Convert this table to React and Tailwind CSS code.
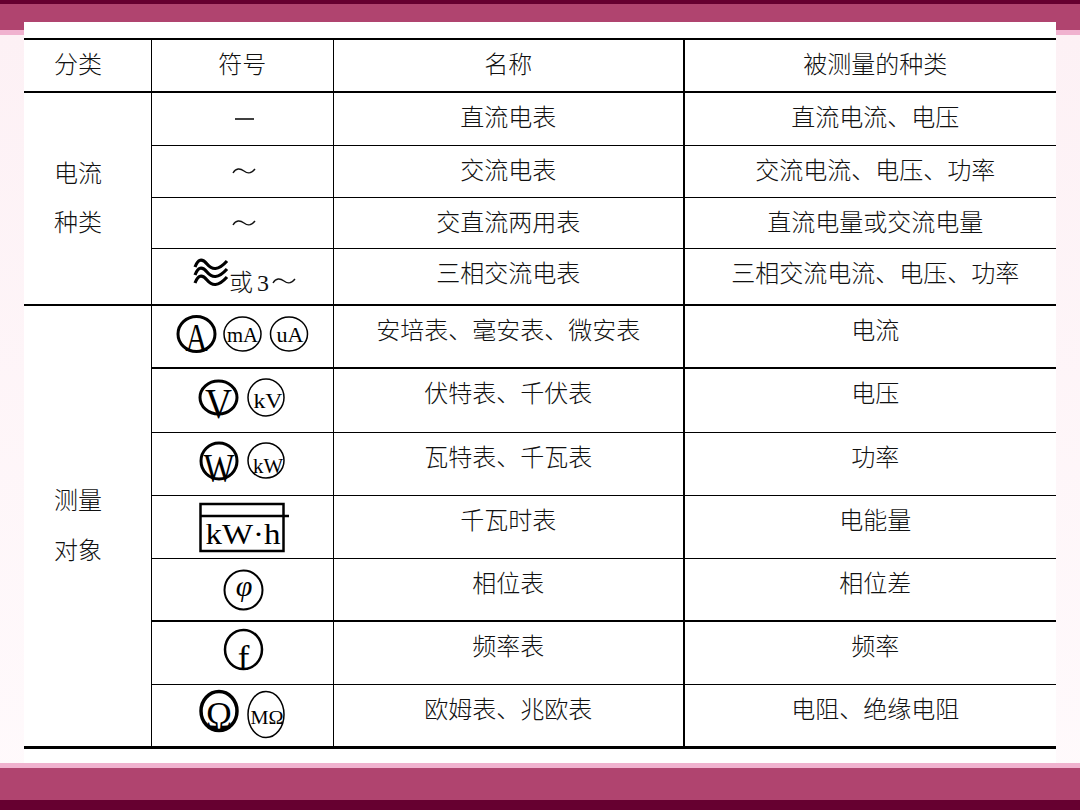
import React from 'react';

const SERIF = "'Liberation Serif', 'Times New Roman', serif";
const CJK = "'Noto Sans CJK SC', sans-serif";

const Ring = ({ cx, cy, rx, ry, w }) => (
    <ellipse cx={cx} cy={cy} rx={rx} ry={ry} fill="none" stroke="#000" strokeWidth={w} />
);

const T = ({ x, y, size, len, italic, children }) => (
    <text
        x={x}
        y={y}
        fontSize={size}
        fontFamily={SERIF}
        fontStyle={italic ? 'italic' : 'normal'}
        textAnchor="middle"
        textLength={len}
        lengthAdjust={len ? 'spacingAndGlyphs' : undefined}
        fill="#000"
    >
        {children}
    </text>
);

// symbol drawings, coordinates relative to the cell's top-left corner
const Symbol = ({ type, h }) => {
    let body = null;
    if (type === 'dash') {
        body = <line x1="83" y1="26" x2="102" y2="26" stroke="#111" strokeWidth="1.6" />;
    } else if (type === 'tilde') {
        body = <path d="M81 27 C84 22 88 22 92 25 C96 28 99 28 103 23" fill="none" stroke="#111" strokeWidth="1.4" />;
    } else if (type === 'three') {
        body = (
            <g>
                {[0, 8, 16].map((o) => (
                    <path
                        key={o}
                        d={`M43 ${18 + o} C46 ${10 + o} 50 ${9 + o} 55 ${15 + o} C60 ${21 + o} 66 ${22 + o} 75 ${12 + o}`}
                        fill="none"
                        stroke="#000"
                        strokeWidth="3.2"
                    />
                ))}
                <text x="77" y="42" fontSize="24" fill="#111">
                    <tspan fontFamily={CJK} fontWeight="300">或</tspan>
                    <tspan dx="4" fontFamily={SERIF}>3</tspan>
                </text>
                <path d="M121 34 C124 29 128 29 132 32 C136 35 139 35 143 30" fill="none" stroke="#111" strokeWidth="1.4" />
            </g>
        );
    } else if (type === 'A') {
        body = (
            <g>
                <Ring cx={44.5} cy={28} rx={18.5} ry={17.5} w={3} />
                <T x={44.5} y={45} size={40} len={22}>A</T>
                <Ring cx={90.5} cy={28} rx={18.5} ry={17} w={1.5} />
                <T x={90.5} y={36} size={21} len={31}>mA</T>
                <Ring cx={137} cy={28} rx={18.5} ry={17} w={1.5} />
                <T x={138} y={36} size={21} len={27}>uA</T>
            </g>
        );
    } else if (type === 'V') {
        body = (
            <g>
                <Ring cx={66.5} cy={28.5} rx={18.5} ry={16.5} w={3} />
                <T x={66.5} y={49} size={43} len={27}>V</T>
                <Ring cx={114} cy={28.5} rx={18} ry={18.5} w={1.5} />
                <T x={116} y={39} size={22} len={29}>kV</T>
            </g>
        );
    } else if (type === 'W') {
        body = (
            <g>
                <Ring cx={67} cy={28} rx={18} ry={18} w={3} />
                <T x={67} y={48} size={41} len={31}>W</T>
                <Ring cx={114} cy={27.5} rx={18} ry={17.5} w={1.5} />
                <T x={116} y={40} size={22} len={30}>kW</T>
            </g>
        );
    } else if (type === 'kWh') {
        body = (
            <g>
                <rect x={48.5} y={8} width={83} height={47} fill="none" stroke="#000" strokeWidth={2.5} />
                <line x1={48} y1={20} x2={137} y2={20} stroke="#000" strokeWidth={2.5} />
                <T x={91} y={48} size={30} len={75}>kW·h</T>
            </g>
        );
    } else if (type === 'phi') {
        body = (
            <g>
                <Ring cx={91.5} cy={31} rx={19} ry={19.5} w={2} />
                <T x={92} y={37} size={30} italic>φ</T>
            </g>
        );
    } else if (type === 'f') {
        body = (
            <g>
                <Ring cx={91.5} cy={27.5} rx={18.5} ry={19.5} w={2.5} />
                <T x={91.5} y={48} size={35}>f</T>
            </g>
        );
    } else if (type === 'ohm') {
        body = (
            <g>
                <Ring cx={67} cy={26} rx={18} ry={19.5} w={3.5} />
                <T x={67} y={44} size={40} len={26}>Ω</T>
                <Ring cx={114} cy={29.5} rx={18} ry={23} w={1.5} />
                <T x={115} y={39} size={18} len={33}>MΩ</T>
            </g>
        );
    }
    return (
        <svg width="182" height={h} className="block">
            {body}
        </svg>
    );
};

const rows = [
    { h: 'h-[53px]', px: 53, line: 'border-b border-black', name: '直流电表', kind: '直流电流、电压', sym: 'dash' },
    { h: 'h-[52px]', px: 52, line: 'border-b border-black', name: '交流电表', kind: '交流电流、电压、功率', sym: 'tilde' },
    { h: 'h-[51px]', px: 51, line: 'border-b border-black', name: '交直流两用表', kind: '直流电量或交流电量', sym: 'tilde' },
    { h: 'h-[57px]', px: 57, line: 'border-b-2 border-black', name: '三相交流电表', kind: '三相交流电流、电压、功率', sym: 'three' },
    { h: 'h-[63px]', px: 63, line: 'border-b-2 border-black', name: '安培表、毫安表、微安表', kind: '电流', sym: 'A' },
    { h: 'h-[64px]', px: 64, line: 'border-b border-black', name: '伏特表、千伏表', kind: '电压', sym: 'V' },
    { h: 'h-[63px]', px: 63, line: 'border-b border-black', name: '瓦特表、千瓦表', kind: '功率', sym: 'W' },
    { h: 'h-[63px]', px: 63, line: 'border-b border-black', name: '千瓦时表', kind: '电能量', sym: 'kWh' },
    { h: 'h-[63px]', px: 63, line: 'border-b-2 border-black', name: '相位表', kind: '相位差', sym: 'phi' },
    { h: 'h-[63px]', px: 63, line: 'border-b border-black', name: '频率表', kind: '频率', sym: 'f' },
    { h: 'h-[63px]', px: 63, line: 'border-b-[3px] border-black', name: '欧姆表、兆欧表', kind: '电阻、绝缘电阻', sym: 'ohm' },
];

const App = () => {
    return (
        <div className="w-[1080px] h-[810px] flex flex-col overflow-hidden bg-[linear-gradient(to_bottom,#660030_4px,#b0446f_4px,#b0446f_30px,#f0b2cf_30px,#f0b2cf_35px,#fdf1f5_35px,#fffafc_100%)] font-['Liberation_Serif','Noto_Sans_CJK_SC',serif] text-[24px] font-light text-[#111]">
            <div className="mx-[24px] mt-[22px] h-[741px] bg-white pt-[16px]">
                <table className="w-full table-fixed border-collapse">
                    <colgroup>
                        <col className="w-[127px]" />
                        <col className="w-[182px]" />
                        <col className="w-[350px]" />
                        <col className="w-[372px]" />
                    </colgroup>
                    <tbody>
                        <tr className="h-[53px]">
                            <td className="border-t-2 border-b-2 border-black align-top pt-[12px] pl-[30px] leading-[26px]">分类</td>
                            <td className="border-t-2 border-b-2 border-l border-black align-top pt-[12px] text-center leading-[26px]">符号</td>
                            <td className="border-t-2 border-b-2 border-l border-black align-top pt-[12px] text-center leading-[26px]">名称</td>
                            <td className="border-t-2 border-b-2 border-l-2 border-black align-top pt-[12px] pl-[10px] text-center leading-[26px]">被测量的种类</td>
                        </tr>
                        {rows.map((r, i) => (
                            <tr key={i} className={r.h}>
                                {i === 0 && (
                                    <td rowSpan={4} className="border-b-2 border-black align-middle pl-[30px] leading-[49px]">
                                        电流<br />种类
                                    </td>
                                )}
                                {i === 4 && (
                                    <td rowSpan={7} className="border-b-[3px] border-black align-middle pl-[30px] leading-[50px]">
                                        测量<br />对象
                                    </td>
                                )}
                                <td className={`${r.line} border-l p-0 align-top`}>
                                    <Symbol type={r.sym} h={r.px - 2} />
                                </td>
                                <td className={`${r.line} border-l align-top pt-[12px] text-center leading-[26px]`}>{r.name}</td>
                                <td className={`${r.line} border-l-2 align-top pt-[12px] pl-[10px] text-center leading-[26px]`}>{r.kind}</td>
                            </tr>
                        ))}
                    </tbody>
                </table>
            </div>
            <div className="h-[5px] bg-[#f0b2cf]" />
            <div className="h-[32px] bg-[#b0446f]" />
            <div className="h-[10px] bg-[#660030]" />
        </div>
    );
};

export default App;
